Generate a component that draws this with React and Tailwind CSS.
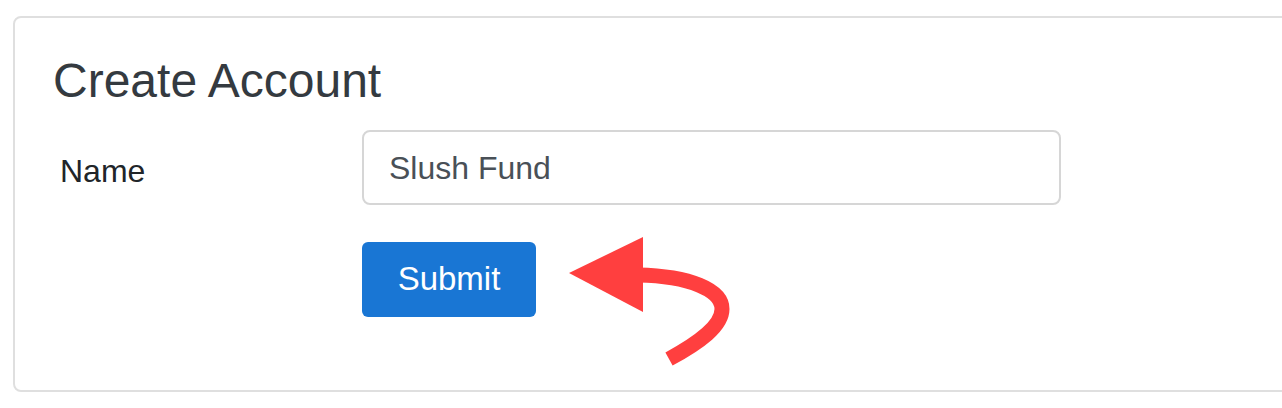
import React from 'react';

const font = { fontFamily: '"Liberation Sans", Arial, sans-serif' };

const CurvedArrow = () => (
  <svg className="absolute inset-0 pointer-events-none" width="1282" height="408" viewBox="0 0 1282 408">
    <path
      d="M 638 275 C 690 276, 722 290, 722 309 C 722 326, 700 342, 669 359"
      fill="none"
      stroke="#ff3f3f"
      strokeWidth="15"
    />
    <polygon points="569,273 643,237 643,312" fill="#ff3f3f" />
  </svg>
);

export default function App() {
  return (
    <div className="relative w-[1282px] h-[408px] overflow-hidden bg-white pt-[16px] pl-[13px]" style={font}>
      {/* Card */}
      <div className="w-[1300px] h-[376px] border-2 border-[#dfdfdf] rounded-[8px] pt-[34px] pl-[38px]">
        <h2 className="text-[48px] leading-[1.2] text-[#343a40] font-normal">Create Account</h2>

        {/* Form */}
        <div className="mt-[20px] flex items-start">
          <label className="w-[302px] ml-[7px] pt-[17px] text-[32px] leading-[48px] text-[#212529]">Name</label>
          <div className="flex flex-col items-start">
            <div className="w-[699px] h-[75px] border-2 border-[#d6d6d6] rounded-[8px] pl-[25px] pt-[12px] text-[32px] leading-[48px] text-[#495057]">
              Slush Fund
            </div>
            <button className="mt-[37px] w-[174px] h-[75px] rounded-[6px] bg-[#1976d4] text-white text-[33px] flex items-center justify-center">
              Submit
            </button>
          </div>
        </div>
      </div>

      <CurvedArrow />
    </div>
  );
}
